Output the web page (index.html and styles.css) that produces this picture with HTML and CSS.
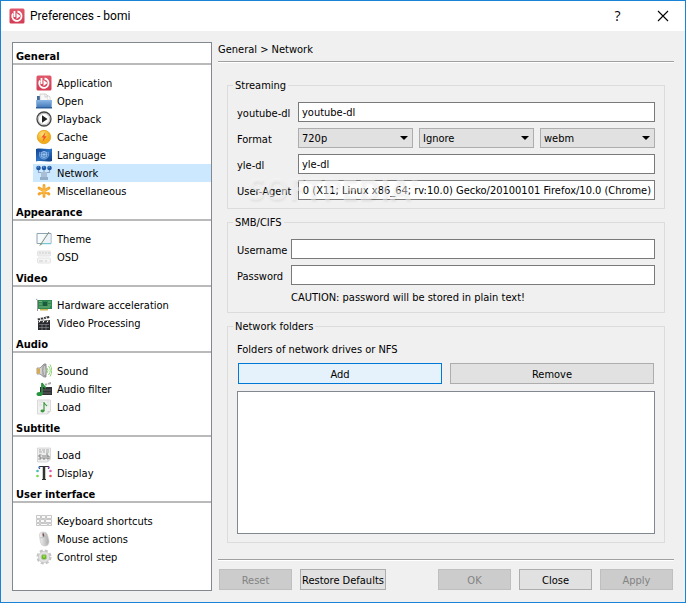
FILE: index.html
```html
<!DOCTYPE html>
<html lang="en">
<head>
<meta charset="utf-8">
<title>Preferences - bomi</title>
<link rel="stylesheet" href="styles.css">
</head>
<body>
<svg class="defs" aria-hidden="true">
  <defs>
    <linearGradient id="red" x2="0" y2="1"><stop stop-color="#e0586b"/><stop offset="1" stop-color="#d23c54"/></linearGradient>
    <linearGradient id="blue" x2="0" y2="1"><stop stop-color="#8db8e6"/><stop offset="1" stop-color="#3f75b6"/></linearGradient>
    <linearGradient id="flag" x2="1" y2="1"><stop stop-color="#0d3f8c"/><stop offset=".5" stop-color="#2f74c4"/><stop offset="1" stop-color="#0b3a80"/></linearGradient>
    <radialGradient id="gold" cx=".4" cy=".3"><stop stop-color="#ffe27a"/><stop offset="1" stop-color="#f2ac1c"/></radialGradient>
    <linearGradient id="silver"><stop stop-color="#f4f4f4"/><stop offset="1" stop-color="#a9a9a9"/></linearGradient>
    <symbol id="bomi" viewBox="0 0 16 16">
      <rect x=".5" y=".5" width="15" height="15" rx="1.5" fill="url(#red)"/>
      <path d="M4 5.500A4.700 4.700 0 1 0 8.500 3.500" fill="none" stroke="#fff" stroke-width="1.800"/>
      <path d="M5.500 3v6" stroke="#fff" stroke-width="1.800"/>
      <path d="M7.500 5v6L11.500 8z" fill="#fff"/>
    </symbol>
  </defs>
</svg>
<div class="window">
  <header class="titlebar">
    <svg class="icon"><use href="#bomi"/></svg>
    <h1>Preferences - bomi</h1>
    <button class="caption" type="button" aria-label="Help">?</button>
    <button class="caption" type="button" aria-label="Close window"><svg width="12" height="12" viewBox="0 0 12 12"><path d="M1 1l10 10M11 1L1 11" stroke="#000" stroke-width="1.1"/></svg></button>
  </header>
  <div class="body">
    <nav class="sidebar" aria-label="Preference pages">
      <h2>General</h2>
      <ul>
        <li><a href="#application"><svg class="icon"><use href="#bomi"/></svg>Application</a></li>
        <li><a href="#open"><svg class="icon" viewBox="0 0 16 16"><path d="M1 3h3v5H1z" fill="#42699b"/><path d="M4 8V1h6l2 2v5z" fill="#f7f7f7" stroke="#bbb" stroke-width=".6"/><path d="M9 1v3h3M10 3h3l1 1v4" fill="#fff" stroke="#bbb" stroke-width=".6"/><path d="M0 7h16l-.5 8H.5z" fill="url(#blue)"/><path d="M0 14h16v1.500H0z" fill="#2f609d"/></svg>Open</a></li>
        <li><a href="#playback"><svg class="icon" viewBox="0 0 16 16"><circle cx="8" cy="8" r="7" fill="#eee" stroke="#444" stroke-width="1.3"/><circle cx="8" cy="8" r="5.600" fill="#fff" stroke="#aaa" stroke-width=".7"/><path d="M6 4.200v7.600L11.500 8z" fill="#222"/></svg>Playback</a></li>
        <li><a href="#cache"><svg class="icon" viewBox="0 0 16 16"><circle cx="8" cy="8" r="6.700" fill="url(#gold)" stroke="#e5a11a" stroke-width=".8"/><path d="M9.500 3L5.500 8.500h2.200L6.500 13l4.200-5.800H8.400z" fill="#f0562a"/></svg>Cache</a></li>
        <li><a href="#language"><svg class="icon" viewBox="0 0 16 16"><path d="M0 2c5-1.500 11 1 16-.5V14c-5 1.500-11-1-16 .5z" fill="url(#flag)"/><circle cx="8" cy="7.500" r="3" fill="none" stroke="#b7d3f2" stroke-width=".8"/><path d="M5 7.500h6M8 4.500v6M6 5.500l4 4M10 5.500l-4 4" stroke="#b7d3f2" stroke-width=".6"/><path d="M4 5C2.500 9 5 12 8 12s5.500-3 4-7" fill="none" stroke="#80addf" stroke-width="1"/></svg>Language</a></li>
        <li><a class="current" href="#network" aria-current="page"><svg class="icon" viewBox="0 0 16 16"><path d="M2.500 5v2.500H6M13.500 5v2.500H10M8 4v5" fill="none" stroke="#8da6c1" stroke-width="1.200"/><path d="M5 7h6v8H5z" fill="#a9bfd6"/><path d="M4 12h8v3H4z" fill="#94aeca"/><circle cx="2.500" cy="3" r="2.300" fill="#1e57a5"/><circle cx="8" cy="3" r="2.300" fill="#1e57a5"/><circle cx="13.500" cy="3" r="2.300" fill="#1e57a5"/><path d="M1.500 2h1.300M7 2h1.300M12.500 2h1.300" stroke="#85b5ea"/></svg>Network</a></li>
        <li><a href="#miscellaneous"><svg class="icon" viewBox="0 0 16 16"><g stroke="#f2a72e" stroke-width="2.800" stroke-linecap="round"><path d="M8 2.500v11M3 5l10 6M13 5L3 11"/></g><path d="M8 3v9M4 6l8 4M12 6l-8 4" stroke="#ffc45d" stroke-width=".8"/></svg>Miscellaneous</a></li>
      </ul>
      <h2>Appearance</h2>
      <ul>
        <li><a href="#theme"><svg class="icon" viewBox="0 0 16 16"><path d="M1 2.500h14v10H1z" fill="#f8fbfc" stroke="#8fa3b2"/><path d="M6 12.500h9" stroke="#79c6d1" stroke-width="1.500"/><path d="M9 3h5.500v9H5z" fill="#edf3f8"/><path d="M13 1L5 13" stroke="#7c8f7b"/><path d="M5 12l-2 3 3-1.500z" fill="#809a72"/></svg>Theme</a></li>
        <li><a href="#osd"><svg class="icon" viewBox="0 0 16 16"><rect x="1.500" y="2" width="13" height="5" rx="1" fill="#eee" stroke="#e4e4e4"/><rect x="1.500" y="9" width="13" height="5" rx="1" fill="#f5f5f5" stroke="#e4e4e4"/><path d="M3 4h2m1 0h2m1 0h2m1 0h2M3 12h4m2 0h2" stroke="#ccc"/></svg>OSD</a></li>
      </ul>
      <h2>Video</h2>
      <ul>
        <li><a href="#hardware-acceleration"><svg class="icon" viewBox="0 0 16 16"><path d="M0 2l1.500 1v11" fill="none" stroke="#999"/><path d="M2 3h14v9H2z" fill="#328653"/><path d="M4 12h8v1.500H4z" fill="#c7b552"/><rect x="7" y="5" width="4" height="4" fill="#1d5a3a"/><path d="M3 4.500h3M3 7h3m6-2h3m-3 3h3M3 10h11" stroke="#74b57c"/></svg>Hardware acceleration</a></li>
        <li><a href="#video-processing"><svg class="icon" viewBox="0 0 16 16"><path d="M2 7h12v8H2z" fill="#292a30"/><path d="M2 6l12-1v2H2zM1.500 3.500L13 1l.5 2L2 5.500z" fill="#3a3a3c"/><path d="M4 3l1 2m2-3l1 2m2-2l1 2M4 5.500l-1 2m5-2l-1 2m5-2l-1 2" stroke="#fff"/><path d="M3 9.500h10M3 12.500h10M6 9v6m4-6v6" stroke="#85868b" stroke-width=".7"/></svg>Video Processing</a></li>
      </ul>
      <h2>Audio</h2>
      <ul>
        <li><a href="#sound"><svg class="icon" viewBox="0 0 16 16"><path d="M1 5h3l4-4h2v13H8l-4-3H1z" fill="url(#silver)" stroke="#777" stroke-width=".7"/><path d="M1 5.500h3v5H1z" fill="#d8ab4c"/><ellipse cx="8.500" cy="7.500" rx="1.700" ry="5.500" fill="#ccc" stroke="#777" stroke-width=".7"/><path d="M11 5q2 2.500 0 5M12.500 3q3.500 4.500 0 9M14 1.500q3.500 6 0 12" fill="none" stroke="#82cf66" stroke-width=".9"/></svg>Sound</a></li>
        <li><a href="#audio-filter"><svg class="icon" viewBox="0 0 16 16"><path d="M4 6h12v8H4z" fill="#303135"/><path d="M5 4l10-3v2L5 6z" fill="#aaa"/><path d="M8 3l1 2m2-3l1 2" stroke="#fff"/><path d="M6 9h9M6 12h9" stroke="#777" stroke-width=".7"/><path d="M6 2v11M6 2q1 3 4 5" fill="none" stroke="#26933d" stroke-width="1.700"/><ellipse cx="3.500" cy="13" rx="3" ry="2" fill="#26933d"/></svg>Audio filter</a></li>
        <li><a href="#audio-load"><svg class="icon" viewBox="0 0 16 16"><path d="M1.500 1h13v11l-3 3h-10z" fill="#f1f1f1" stroke="#ccc" stroke-width=".7"/><path d="M3 3h4m-4 3h3m5-3h2m-2 3h2" stroke="#ccc" stroke-width=".6"/><path d="M8 3v9M8 3q.5 2.500 3 4" fill="none" stroke="#3a993e" stroke-width="1.200"/><ellipse cx="6.500" cy="12" rx="2" ry="1.400" fill="#3a993e"/><path d="M14.500 12h-3v3" fill="#d2d2d2"/></svg>Load</a></li>
      </ul>
      <h2>Subtitle</h2>
      <ul>
        <li><a href="#subtitle-load"><svg class="icon" viewBox="0 0 16 16"><path d="M1.500 1h13v11l-3 3h-10z" fill="#eee" stroke="#ccc" stroke-width=".7"/><path d="M3 3h2m1 0h3m1 0h3M3 5h3m1 0h2m1 0h3" stroke="#aaa"/><path d="M5.500 8H3v2h2v2H2.500M7 8v4h2V8m2-2v6h2V9h-2" fill="none" stroke="#777" stroke-width=".9"/><path d="M14.500 12h-3v3" fill="#d2d2d2"/></svg>Load</a></li>
        <li><a href="#display"><svg class="icon" viewBox="0 0 16 16"><path d="M3.500 4V1.500h9V4M6 14.500h4" fill="none" stroke="#333" stroke-width="1.200"/><path d="M8 1v13" stroke="#333" stroke-width="2.500"/><circle cx="1.500" cy="6" r="1.300" fill="#45bdb7"/><circle cx="1.500" cy="11" r="1.300" fill="#72dc45"/><circle cx="14.500" cy="6" r="1.300" fill="#e15bb7"/><circle cx="14.500" cy="11" r="1.300" fill="#ef5366"/><circle cx="3" cy="2.500" r="1" fill="#6a99ed"/><circle cx="13" cy="2.500" r="1" fill="#a366dd"/></svg>Display</a></li>
      </ul>
      <h2>User interface</h2>
      <ul>
        <li><a href="#keyboard-shortcuts"><svg class="icon" viewBox="0 0 16 16"><path d="M.5 2.500h4v3h-4zm5 0h4v3h-4zm5 0h5v3h-5zM.5 6.500h3v3h-3zm4 0h4v3h-4zm5 0h6v3h-6zM.5 10.500h3v2h-3zm4 0h7v2h-7zm8 0h3v2h-3z" fill="#fafafa" stroke="#b9b9b9" stroke-width=".8"/></svg>Keyboard shortcuts</a></li>
        <li><a href="#mouse-actions"><svg class="icon" viewBox="0 0 16 16"><path d="M3.500 5Q3 1 7 1t4.500 3l1.500 6q0 5-4 5t-4.500-4z" fill="url(#silver)" stroke="#ccc" stroke-width=".7"/><path d="M4 7l7-1.500M7 1l1 5" stroke="#b7b7b7" stroke-width=".7"/><path d="M7 2.500l.7 3" stroke="#7d5355" stroke-width="1.500"/></svg>Mouse actions</a></li>
        <li><a href="#control-step"><svg class="icon" viewBox="0 0 16 16"><circle cx="8" cy="8" r="6.300" fill="none" stroke="#c4c4c4" stroke-width="2.500" stroke-dasharray="2.950 2"/><circle cx="8" cy="8" r="5.600" fill="#e2e2e2" stroke="#c6c6c6" stroke-width=".7"/><circle cx="8" cy="8" r="2.800" fill="#65ae27" stroke="#b8cda5"/><circle cx="8" cy="7.500" r="1.200" fill="#9bdb45"/></svg>Control step</a></li>
      </ul>
    </nav>
    <main class="page">
      <p class="breadcrumb">General &gt; Network</p>
      <form class="form">
        <fieldset>
          <legend>Streaming</legend>
          <div class="rows streaming">
            <label for="youtube-dl">youtube-dl</label>
            <input id="youtube-dl" type="text" value="youtube-dl">
            <label for="quality">Format</label>
            <div class="selects">
              <span class="combo"><select id="quality"><option>720p</option></select></span>
              <span class="combo"><select aria-label="Frame rate"><option>Ignore</option></select></span>
              <span class="combo"><select aria-label="Container"><option>webm</option></select></span>
            </div>
            <label for="yle-dl">yle-dl</label>
            <input id="yle-dl" type="text" value="yle-dl">
            <label for="user-agent">User-Agent</label>
            <div class="agent">
              <input id="user-agent" type="text" value="Mozilla/5.0 (X11; Linux x86_64; rv:10.0) Gecko/20100101 Firefox/10.0 (Chrome)">
              <span class="watermark">SOFTPEDIA<sup>®</sup></span>
            </div>
          </div>
        </fieldset>
        <fieldset>
          <legend>SMB/CIFS</legend>
          <div class="rows smb">
            <label for="username">Username</label>
            <input id="username" type="text">
            <label for="password">Password</label>
            <input id="password" type="password">
            <p class="caution">CAUTION: password will be stored in plain text!</p>
          </div>
        </fieldset>
        <fieldset class="folders">
          <legend>Network folders</legend>
          <div class="folder-box">
            <label for="folders">Folders of network drives or NFS</label>
            <div class="folder-actions">
              <button class="button hot" type="button">Add</button>
              <button class="button" type="button">Remove</button>
            </div>
            <select id="folders" class="list" size="6"></select>
          </div>
        </fieldset>
      </form>
      <footer class="actions">
        <button class="button" type="button" disabled>Reset</button>
        <button class="button" type="button">Restore Defaults</button>
        <button class="button push" type="button" disabled>OK</button>
        <button class="button" type="button">Close</button>
        <button class="button" type="button" disabled>Apply</button>
      </footer>
    </main>
  </div>
</div>
<script src="script.js"></script>
</body>
</html>
```
FILE: styles.css
```css
* { box-sizing: border-box; }

body {
  margin: 0;
  font: 11px/13px "DejaVu Sans Condensed", "DejaVu Sans", sans-serif;
  color: #000;
  background: #f0f0f0;
}

h1, h2, p, ul { margin: 0; padding: 0; }
ul { list-style: none; }
input, select, button { font: inherit; color: inherit; border-radius: 0; margin: 0; }
.defs { position: absolute; width: 0; height: 0; }
.icon { width: 16px; height: 16px; flex: none; }

.window {
  display: flex;
  flex-direction: column;
  min-height: 100vh;
  border: 1px solid #1883d7;
}

/* Title bar */
.titlebar {
  display: flex;
  align-items: center;
  height: 30px;
  padding-left: 8px;
  background: #fff;
}
.titlebar h1 {
  flex: 1;
  margin-left: 5px;
  font: 12px/16px Roboto, "Open Sans", sans-serif;
}
.caption {
  display: flex;
  align-items: center;
  justify-content: center;
  width: 45px;
  height: 30px;
  padding: 0;
  border: 0;
  background: none;
  font: 14px/16px "Open Sans", sans-serif;
}

.body {
  flex: 1;
  display: flex;
  gap: 6px;
  padding: 11px;
}

/* Sidebar */
.sidebar {
  flex: none;
  width: 200px;
  padding: 1px 0;
  border: 1px solid #828790;
  background: #fff;
}
.sidebar h2 {
  height: 21px;
  padding: 6px 3px 0;
  border-bottom: 2px solid #bababa;
  font-size: 11px;
  line-height: 13px;
}
.sidebar ul { padding: 9px 0 0 20px; }
.sidebar a {
  display: flex;
  align-items: center;
  gap: 5px;
  height: 18px;
  padding-left: 3px;
  color: #000;
  text-decoration: none;
}
.sidebar .current { background: #cce8ff; }

/* Page */
.page {
  flex: 1;
  min-width: 0;
  display: flex;
  flex-direction: column;
}
.breadcrumb {
  padding: 1px 0 5px;
  border-bottom: 1px solid #a0a0a0;
  box-shadow: 0 1px #fff;
}
.form {
  flex: 1;
  display: flex;
  flex-direction: column;
  gap: 6px;
  padding: 16px 9px 16px;
}
fieldset {
  min-width: 0;
  margin: 0;
  padding: 9px 9px 8px;
  border: 1px solid #dcdcdc;
}
legend { margin-left: -4px; padding: 1px 2px 0; line-height: 14px; }
.rows {
  display: grid;
  gap: 6px;
  align-items: center;
}
.streaming { grid-template-columns: 55px 1fr; }
.smb { grid-template-columns: 48px 1fr; }
label { white-space: nowrap; }
.rows label { padding-top: 2px; }
.rows input {
  width: 100%;
  height: 20px;
  padding: 1px 3px 0;
  border: 1px solid #7a7a7a;
  background: #fff;
  outline: 0;
}
.selects {
  display: grid;
  grid-template-columns: repeat(3, 1fr);
  gap: 6px;
}
.combo { position: relative; display: flex; }
.combo select {
  width: 100%;
  height: 20px;
  padding: 1px 3px 0;
  border: 1px solid #adadad;
  background: #e1e1e1;
  appearance: none;
}
.combo::after {
  content: "";
  position: absolute;
  right: 5px;
  top: 8px;
  width: 8px;
  height: 4px;
  background: #000;
  clip-path: polygon(0 0, 100% 0, 50% 100%);
  pointer-events: none;
}
.caution { grid-column: 2; }

.agent { position: relative; display: flex; }
.watermark {
  position: absolute;
  left: -50px;
  top: -6px;
  font: bold 30px/30px "Open Sans", sans-serif;
  color: rgba(245, 245, 245, 0.5);
  text-shadow: 1px 2px 2px rgba(0, 0, 0, 0.05);
  white-space: nowrap;
  pointer-events: none;
}
.watermark sup { font-size: 9px; line-height: 9px; vertical-align: 14px; }

/* Network folders */
.folders { flex: 1; display: flex; flex-direction: column; }
.folder-box { flex: 1; display: flex; flex-direction: column; gap: 7px; }
.folder-actions {
  display: grid;
  grid-template-columns: 1fr 1fr;
  gap: 8px;
  padding: 0 1px;
}
.list {
  flex: 1;
  width: 100%;
  min-height: 100px;
  border: 1px solid #828790;
  background: #fff;
  outline: 0;
}

/* Buttons */
.button {
  min-width: 73px;
  height: 21px;
  padding: 1px 1px 0;
  border: 1px solid #adadad;
  background: #e1e1e1;
  white-space: nowrap;
}
.button:disabled { border-color: #bfbfbf; background: #ccc; color: #838383; }
.hot { border-color: #0078d7; background: #e5f1fb; }
.actions {
  display: flex;
  gap: 8px;
  padding: 9px 1px 1px;
  border-top: 1px solid #a0a0a0;
  box-shadow: inset 0 1px #fff;
}
.push { margin-left: auto; }
```
FILE: script.js
```js
// Long user-agent strings are shown from their end.
const agent = document.getElementById("user-agent");
agent.scrollLeft = agent.scrollWidth;
```
